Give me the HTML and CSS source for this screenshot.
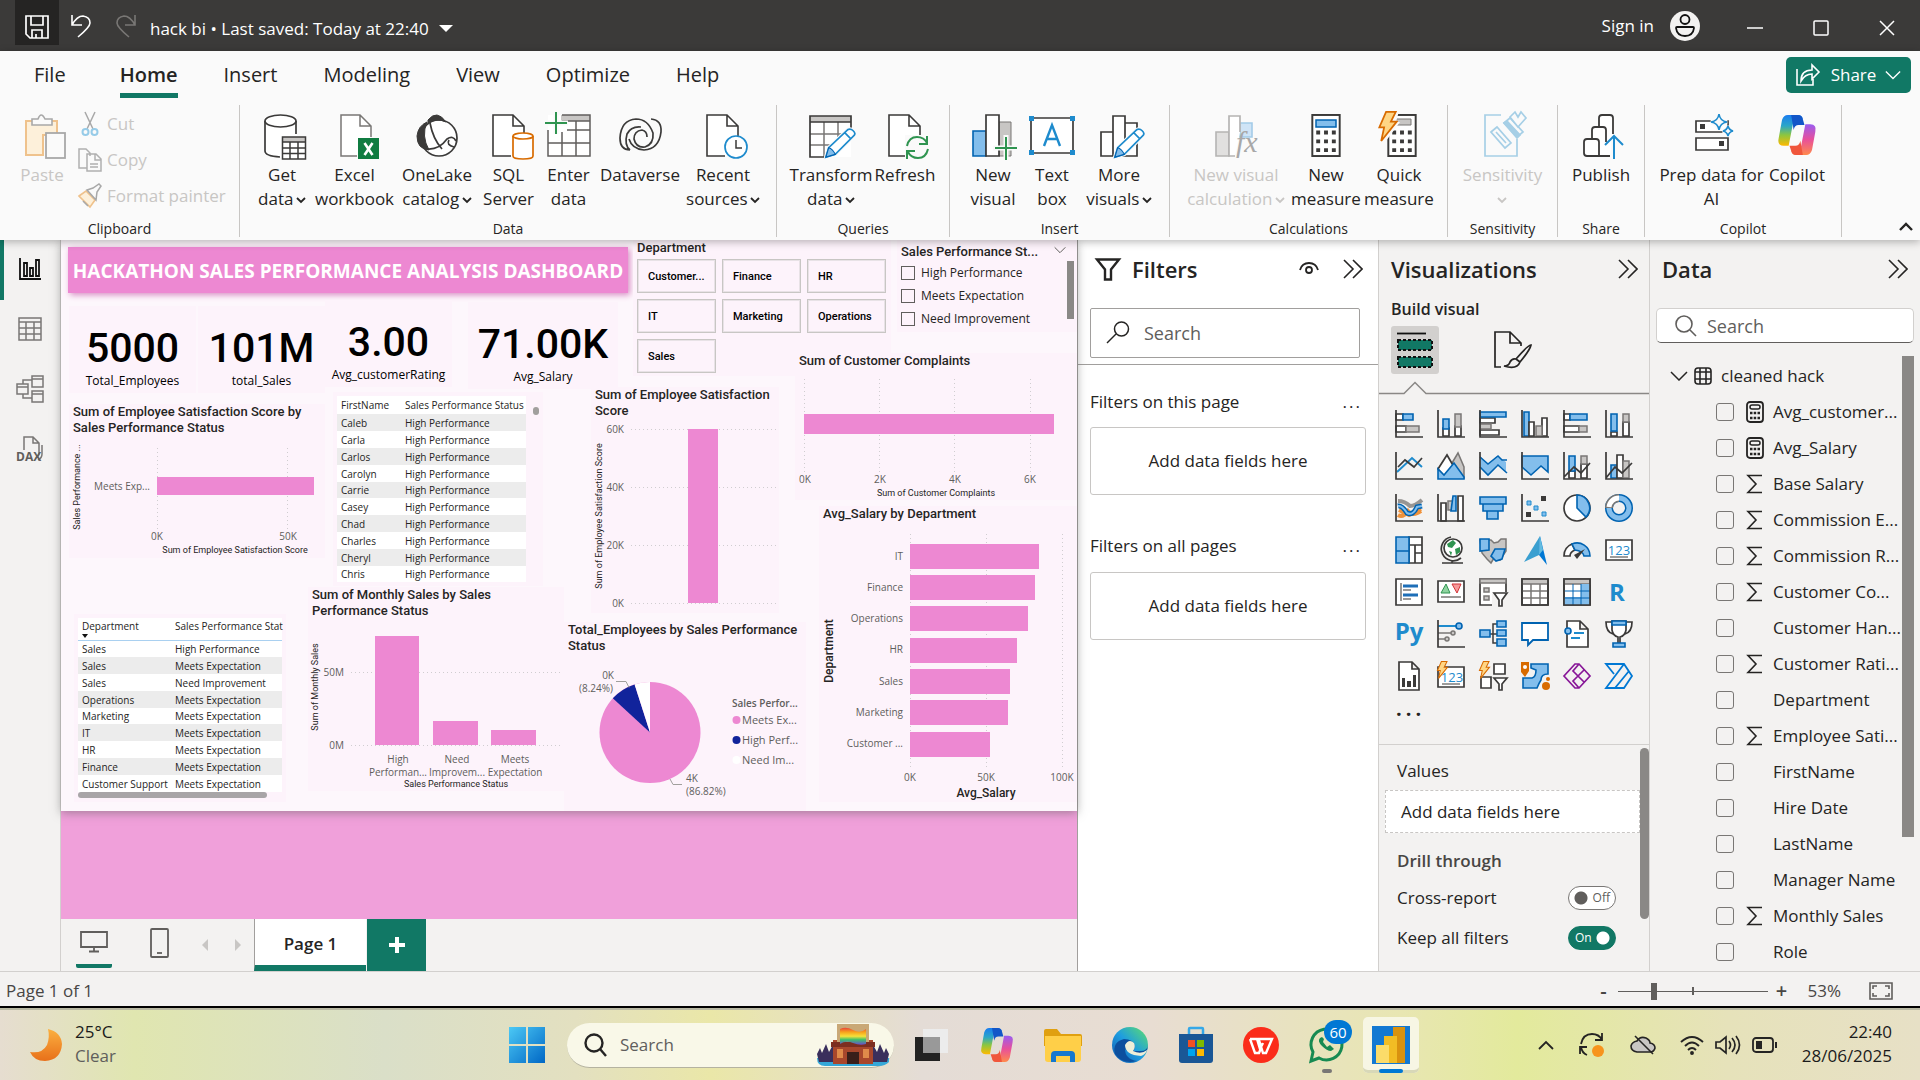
FILE: index.html
```html
<!DOCTYPE html>
<html lang="en">
<head>
<meta charset="utf-8">
<title>hack bi</title>
<link rel="stylesheet" href="styles.css">
</head>
<body>
<svg class="defs" aria-hidden="true">
  <defs>
    <linearGradient id="cpA" x1="0" y1="0" x2="0" y2="1"><stop offset="0" stop-color="#1a7cf0"/><stop offset=".35" stop-color="#2aa6c8"/><stop offset=".65" stop-color="#8cc63f"/><stop offset="1" stop-color="#ffb900"/></linearGradient>
    <linearGradient id="cpB" x1="0" y1="0" x2="0" y2="1"><stop offset="0" stop-color="#9a5cf0"/><stop offset=".5" stop-color="#e8509a"/><stop offset="1" stop-color="#ff8a4c"/></linearGradient>
    <linearGradient id="moon" x1="0" y1="0" x2="0" y2="1"><stop offset="0" stop-color="#fbb040"/><stop offset="1" stop-color="#e8701a"/></linearGradient>
    <linearGradient id="win" x1="0" y1="0" x2="1" y2="1"><stop offset="0" stop-color="#4cc9f5"/><stop offset="1" stop-color="#0067c5"/></linearGradient>
    <linearGradient id="edge" x1="0" y1="1" x2="1" y2="0"><stop offset="0" stop-color="#0f58b0"/><stop offset=".5" stop-color="#1e9de0"/><stop offset="1" stop-color="#5fe06a"/></linearGradient>
    <linearGradient id="rain" x1="0" y1="0" x2="0" y2="1"><stop offset="0" stop-color="#e8453c"/><stop offset=".25" stop-color="#f7a11b"/><stop offset=".5" stop-color="#f6e03a"/><stop offset=".7" stop-color="#3fbf6a"/><stop offset="1" stop-color="#6a4ad0"/></linearGradient>
    <symbol id="doc" viewBox="0 0 48 48"><path d="M39 27V14L28 3H8v41h20" fill="#fff" stroke="none"/><path d="M39 25V14L28 3H8v41h18M28 3v11h11" fill="none" stroke="#3b3a39" stroke-width="1.6"/></symbol>
    <symbol id="pencil" viewBox="0 0 34 34"><path d="M2 32l3-10L25 3q3-2 6 1t1 5L12 29z" fill="#fff" stroke="#fafafa" stroke-width="4"/><path d="M2 32l3-10L25 3q3-2 6 1t1 5L12 29zM22 6l6 6" fill="#fff" stroke="#1e8bcd" stroke-width="1.8"/><path d="M2 32l3-10q4 1 7 7z" fill="#83beec" stroke="#0063b1" stroke-width="1.2"/></symbol>
    <symbol id="dbl" viewBox="0 0 20 20"><path d="M1 1l9 9-9 9M10 1l9 9-9 9" fill="none" stroke="#252423" stroke-width="1.6"/></symbol>
    <symbol id="caret" viewBox="0 0 10 8"><path d="M1 2l4 4 4-4" fill="none" stroke="currentColor" stroke-width="1.8"/></symbol>
    <symbol id="chev" viewBox="0 0 18 10"><path d="M1 1l8 8 8-8" fill="none" stroke="currentColor" stroke-width="1.5"/></symbol>
    <symbol id="sigma" viewBox="0 0 18 20"><path d="M16 1.5H2L10 10 2 18.500H16" fill="none" stroke="#252423" stroke-width="1.6"/></symbol>
    <symbol id="calc" viewBox="0 0 18 22"><rect x="1" y="1" width="16" height="20" rx="3" fill="none" stroke="#252423" stroke-width="1.8"/><rect x="4" y="4" width="10" height="4" rx="2" fill="none" stroke="#252423" stroke-width="1.500"/><path d="M4 12h2.500M7.700 12h2.500M11.500 12H14M4 17h2.500M7.700 17h2.500M11.500 17H14" stroke="#252423" stroke-width="2.500"/></symbol>
    <symbol id="bolt" viewBox="0 0 20 32"><path d="M8 1h10l-5 10h6L3 31l3-14H1z" fill="#ffd685" stroke="#d86b00" stroke-width="1.800"/></symbol>
    <symbol id="copilot" viewBox="0 0 46 48"><path d="M30 5Q29 0 24 0H12Q7 0 5 6L1 28q-2 9 6 9h6l5-26q1-6 7-6z" fill="url(#cpA)"/><path d="M16 0h8q5 0 6 5l2 7h-7q-5 0-6 6z" fill="#1256c8"/><path d="M16 43q1 5 6 5h12q5 0 7-6l4-22q2-9-6-9h-6l-5 26q-1 6-7 6z" fill="url(#cpB)"/><path d="M30 48h-8q-5 0-6-5l-2-6h7q5 0 6-6z" fill="#f0563c"/></symbol>
    <symbol id="pad" viewBox="0 0 30 44"><rect x="1" y="1" width="28" height="42" fill="#fff" stroke="#3b3a39" stroke-width="2"/><path d="M5 17h4v4H5zM13 17h4v4h-4zM21 17h4v4h-4zM5 26h4v4H5zM13 26h4v4h-4zM21 26h4v4h-4zM5 35h4v4H5zM13 35h4v4h-4zM21 35h4v4h-4z" fill="#3b3a39"/></symbol>
  </defs>
</svg>

<header class="titlebar">
  <button class="save" aria-label="Save"><svg width="24" height="24" viewBox="0 0 24 24" fill="none" stroke="#fff" stroke-width="1.700"><path d="M1 1h22v22H5l-4-4zM6 1v9h12V1M7 23v-8h10v8M11 19v4"/></svg></button>
  <button aria-label="Undo"><svg width="22" height="24" viewBox="0 0 22 24" fill="none" stroke="#fff" stroke-width="1.600"><path d="M2 1v10h10M2 11Q7 2 13 2q7 1 7 7 0 4-12 14"/></svg></button>
  <button aria-label="Redo"><svg width="22" height="24" viewBox="0 0 22 24" fill="none" stroke="#797775" stroke-width="1.600"><path d="M20 1v10H10M20 11Q15 2 9 2 2 3 2 9q0 4 12 14"/></svg></button>
  <button class="filename">hack bi • Last saved: Today at 22:40 <svg width="14" height="8" viewBox="0 0 14 8"><path d="M0 0h14L7 7z" fill="#fff"/></svg></button>
  <button class="signin">Sign in <svg width="30" height="30" viewBox="0 0 30 30"><circle cx="15" cy="15" r="15" fill="#f3f2f1"/><circle cx="15" cy="8.500" r="4.500" fill="none" stroke="#111" stroke-width="1.800"/><path d="M7 16h16q1 0 1 1-1 8-9 8t-9-8q0-1 1-1z" fill="none" stroke="#111" stroke-width="1.800"/></svg></button>
  <button class="wbtn" aria-label="Minimize"><svg width="16" height="16" viewBox="0 0 16 16"><path d="M0 8h16" stroke="#fff" stroke-width="1.500"/></svg></button>
  <button class="wbtn" aria-label="Maximize"><svg width="16" height="16" viewBox="0 0 16 16"><rect x="1" y="1" width="14" height="14" rx="1" fill="none" stroke="#fff" stroke-width="1.500"/></svg></button>
  <button class="wbtn" aria-label="Close"><svg width="16" height="16" viewBox="0 0 16 16"><path d="M1 1l14 14M15 1L1 15" stroke="#fff" stroke-width="1.500"/></svg></button>
</header>

<section class="ribbon">
  <nav class="tabs">
    <button>File</button><button class="on">Home</button><button>Insert</button><button>Modeling</button><button>View</button><button>Optimize</button><button>Help</button>
    <button class="share"><svg width="24" height="22" viewBox="0 0 24 22" fill="none" stroke="#fff" stroke-width="1.600"><path d="M1 5v16h16v-6M5 17q0-11 11-11V1l7 7-7 7v-5q-7 0-11 7z"/></svg>Share<svg width="16" height="10"><use href="#chev"/></svg></button>
  </nav>
  <div class="groups">
    <div class="group g-clip">
      <div class="cmds">
        <button class="cmd off"><svg class="ic" viewBox="0 0 48 48"><path d="M8 9h31v14H25v20H8z" fill="#fdf0da" stroke="#efc28c" stroke-width="2"/><path d="M14 13V7h6q3-8 7 0h7v6z" fill="#fafafa" stroke="#a8a8a8" stroke-width="1.600"/><rect x="28" y="21" width="19" height="25" fill="#fafafa" stroke="#a8a8a8" stroke-width="1.800"/></svg>Paste</button>
        <div class="stack">
          <button class="off"><svg width="24" height="24" viewBox="0 0 24 24"><path d="M7 0l8 17M17 0L9 17" stroke="#a8a8a8" stroke-width="1.500"/><circle cx="7.500" cy="20" r="3" fill="none" stroke="#96cbe8" stroke-width="2"/><circle cx="16.500" cy="20" r="3" fill="none" stroke="#96cbe8" stroke-width="2"/></svg>Cut</button>
          <button class="off"><svg width="24" height="24" viewBox="0 0 24 24" fill="#fafafa" stroke="#b0b0b0" stroke-width="1.500"><path d="M9 20H1V1h7l4 4v3M9 6h9l5 5v12H9zM17 6v6h6M12 16h8M12 19h8"/></svg>Copy</button>
          <button class="off"><svg width="24" height="24" viewBox="0 0 24 24"><path d="M1 12l7-5 9 9-5 7z" fill="#fdf0da" stroke="#efc28c" stroke-width="1.600"/><path d="M5 17l5 5M9 6l6-2 6-4 2 2-4 6-1 8z" fill="#fafafa" stroke="#a8a8a8" stroke-width="1.500"/></svg>Format painter</button>
        </div>
      </div>
      <p>Clipboard</p>
    </div>
    <div class="group g-data">
      <div class="cmds">
        <button class="cmd"><svg class="ic" viewBox="0 0 48 48"><path d="M7 9v30q0 5 16 6V26h16V9" fill="#fff" stroke="none"/><path d="M22 45Q7 44 7 39V9M38 9v13" fill="none" stroke="#3b3a39" stroke-width="1.700"/><ellipse cx="22.500" cy="9" rx="15.500" ry="6" fill="#fff" stroke="#3b3a39" stroke-width="1.700"/><path d="M24.500 25h23v22h-23z" fill="#fff"/><path d="M24.500 25h23v5h-23z" fill="#c8c6c4"/><path d="M24.500 25h23v22h-23zM24.500 30h23M24.500 36h23M24.500 41.500h23M32 30v17M40 30v17" fill="none" stroke="#3b3a39" stroke-width="1.500"/></svg><span>Get<br>data <svg class="c"><use href="#caret"/></svg></span></button>
        <button class="cmd"><svg class="ic" viewBox="0 0 48 48"><path d="M40 25V14L29 3H10v41h16M29 3v11h11" fill="#fff" stroke="#797775" stroke-width="1.500"/><path d="M27 26h21v21H27z" fill="#107c41"/><path d="M33.500 31l8 12M41.500 31l-8 12" stroke="#fff" stroke-width="2.600"/></svg><span>Excel<br>workbook</span></button>
        <button class="cmd"><svg class="ic" viewBox="0 0 48 48"><circle cx="26" cy="26" r="18" fill="#fff" stroke="#3b3a39" stroke-width="1.700"/><path d="M15 8Q24-3 33 10 22 5 15 12zM14 10q-6 14 2 28Q4 37 4 24 5 14 14 10z" fill="#3b3a39" stroke="#3b3a39"/><path d="M17 11q3 16 12 26M14 37q12 1 20-10 6-4 9 2M36 28q-3 5 5 7" fill="none" stroke="#3b3a39" stroke-width="1.700"/></svg><span>OneLake<br>catalog <svg class="c"><use href="#caret"/></svg></span></button>
        <button class="cmd"><svg class="ic" viewBox="0 0 48 48"><use href="#doc"/><path d="M28 24v20q0 3 10 3t10-3V24" fill="#fff" stroke="#d86b00" stroke-width="1.700"/><ellipse cx="38" cy="24" rx="10" ry="3" fill="#fff" stroke="#d86b00" stroke-width="1.700"/></svg><span>SQL<br>Server</span></button>
        <button class="cmd"><svg class="ic" viewBox="0 0 48 48"><path d="M3 3h42v41H3z" fill="#fff"/><path d="M16 3h29v6H16z" fill="#c8c6c4"/><path d="M3 18v26h42V3H17M17 9h28M22 18h23M3 31h42M17 20v24M31 9v35" fill="none" stroke="#605e5c" stroke-width="1.500"/><path d="M11-1v23M-1 11h24" stroke="#fafafa" stroke-width="5"/><path d="M11 0v22M0 11h22" stroke="#2f9450" stroke-width="2"/></svg><span>Enter<br>data</span></button>
        <button class="cmd"><svg class="ic" viewBox="0 0 48 48" fill="none" stroke="#3b3a39" stroke-width="1.700"><path d="M14 38Q4 38 4 26 5 8 20 7q12 0 17 14 1 11-8 14-9 1-11-8 0-8 8-9 5 1 5 7M14 38q-6-5-3-16 4-8 14-7"/><path d="M35 7q11 1 10 13-2 17-17 18-12-1-15-11"/></svg><span>Dataverse</span></button>
        <button class="cmd"><svg class="ic" viewBox="0 0 48 48"><use href="#doc"/><circle cx="37" cy="35" r="11" fill="#fff" stroke="#1e8bcd" stroke-width="1.700"/><path d="M37 28v8h6" fill="none" stroke="#3b3a39" stroke-width="1.500"/></svg><span>Recent<br>sources <svg class="c"><use href="#caret"/></svg></span></button>
      </div>
      <p>Data</p>
    </div>
    <div class="group g-query">
      <div class="cmds">
        <button class="cmd"><svg class="ic" viewBox="0 0 48 48"><path d="M3 4h41v41H3z" fill="#fff"/><path d="M3 4h41v6H3z" fill="#c8c6c4"/><path d="M3 22h41M3 33h30M17 10v35M31 10v23" stroke="#797775" stroke-width="1.500"/><path d="M18 45H3V4h41v14M3 10h41" fill="none" stroke="#3b3a39" stroke-width="1.700"/><use href="#pencil" x="17" y="15" width="32" height="32"/></svg><span>Transform<br>data <svg class="c"><use href="#caret"/></svg></span></button>
        <button class="cmd"><svg class="ic" viewBox="0 0 48 48"><use href="#doc"/><path d="M24 23h24v25H24z" fill="#fafafa"/><path d="M26 34q2-9 10-9 7 0 10 6M46 24v8h-8M47 37q-2 9-10 9-7 0-10-6M26 47v-8h8" fill="none" stroke="#2f9450" stroke-width="2"/></svg><span>Refresh</span></button>
      </div>
      <p>Queries</p>
    </div>
    <div class="group g-insert">
      <div class="cmds">
        <button class="cmd"><svg class="ic" viewBox="0 0 48 48"><path d="M30 10h12v34H30z" fill="#c8c6c4" stroke="#797775"/><path d="M4 19h13v25H4z" fill="#83beec" stroke="#0063b1" stroke-width="1.600"/><path d="M17 3h13v41H17z" fill="#fff" stroke="#3b3a39" stroke-width="1.700"/><path d="M37 23v25M24 36h25" stroke="#fafafa" stroke-width="5"/><path d="M37 25v23M26 36h22" stroke="#2f9450" stroke-width="2"/></svg><span>New<br>visual</span></button>
        <button class="cmd"><svg class="ic" viewBox="0 0 48 48"><path d="M3 6h42v35H3z" fill="#fff" stroke="#3b3a39" stroke-width="1.700"/><path d="M1 4h5v5H1zM42 4h5v5h-5zM1 38h5v5H1zM42 38h5v5h-5z" fill="#1e8bcd"/><path d="M16 34l8-21 8 21M19 27h10" fill="none" stroke="#1e8bcd" stroke-width="2.400"/></svg><span>Text<br>box</span></button>
        <button class="cmd"><svg class="ic" viewBox="0 0 48 48" fill="#fff" stroke="#3b3a39" stroke-width="1.700"><path d="M30 11h12v33H30zM6 20h12v24H6zM18 4h12v40H18z"/><use href="#pencil" x="18" y="15" width="32" height="32"/></svg><span>More<br>visuals <svg class="c"><use href="#caret"/></svg></span></button>
      </div>
      <p>Insert</p>
    </div>
    <div class="group g-calc">
      <div class="cmds">
        <button class="cmd off"><svg class="ic" viewBox="0 0 48 48"><path d="M28 11h12v14H28z" fill="#cfe4f6" stroke="#a3cbe8" stroke-width="1.600"/><path d="M4 20h13v24H4z" fill="#e1e0df" stroke="#b5b4b3" stroke-width="1.600"/><path d="M28 20V4H17v40h6" fill="#fff" stroke="#b5b4b3" stroke-width="1.700"/><text x="24" y="40" class="fx">fx</text></svg><span>New visual<br>calculation <svg class="c"><use href="#caret"/></svg></span></button>
        <button class="cmd"><svg class="ic" viewBox="0 0 48 48"><use href="#pad" x="9" y="2" width="30" height="43"/><path d="M14 8h20v7H14z" fill="#83beec" stroke="#0063b1" stroke-width="1.500"/></svg><span>New<br>measure</span></button>
        <button class="cmd"><svg class="ic" viewBox="0 0 48 48"><use href="#pad" x="12" y="2" width="30" height="43"/><path d="M17 7h19v6H17z" fill="#c8c6c4" stroke="#797775"/><path d="M9-1h15l-3 11h4L8 33z" fill="#fafafa"/><use href="#bolt" x="3" y="-1" width="20" height="31"/></svg><span>Quick<br>measure</span></button>
      </div>
      <p>Calculations</p>
    </div>
    <div class="group g-sens">
      <div class="cmds">
        <button class="cmd off"><svg class="ic" viewBox="0 0 48 48" fill="#fafafa" stroke="#a6cfe6" stroke-width="1.700"><path d="M22 3H6v41h32V27"/><path d="M12 20l6-5 14 16-6 5zM17 20l10 11"/><path d="M25 11l6-5 13 14-6 5z"/><path d="M25 11l3-2 13 14-3 3z" fill="#a6cfe6"/><path d="M31 5l5-5 3 5 3-5 5 6-8 9z"/></svg><span>Sensitivity<br><svg class="c"><use href="#caret"/></svg></span></button>
      </div>
      <p>Sensitivity</p>
    </div>
    <div class="group g-share">
      <div class="cmds">
        <button class="cmd"><svg class="ic" viewBox="0 0 48 48" fill="#fff" stroke="#3b3a39" stroke-width="1.800"><path d="M36 22V6q0-3-3-3h-8q-3 0-3 3v38h11"/><path d="M29 30V18q0-3-3-3h-8q-3 0-3 3v26h14"/><path d="M7 30q0-3 3-3h9q3 0 3 3v14H10q-3 0-3-3z"/><path d="M37 47V24" stroke="#fafafa" stroke-width="6"/><path d="M37 47V24M28 33l9-9 9 9" fill="none" stroke="#1e8bcd" stroke-width="2"/></svg><span>Publish</span></button>
      </div>
      <p>Share</p>
    </div>
    <div class="group g-copilot">
      <div class="cmds">
        <button class="cmd"><svg class="ic" viewBox="0 0 48 48"><path d="M8 9h32v11H8zM8 26h32v12H8z" fill="#fff" stroke="#3b3a39" stroke-width="1.700"/><path d="M12 12h5v5h-5zM31 29h5v5h-5z" fill="#3b3a39"/><path d="M31 2q1 7 8 8-7 1-8 8-1-7-8-8 7-1 8-8zM40 14q1 4 5 5-4 1-5 5-1-4-5-5 4-1 5-5z" fill="#fafafa" stroke="#fafafa" stroke-width="5"/><path d="M31 2q1 7 8 8-7 1-8 8-1-7-8-8 7-1 8-8zM40 14q1 4 5 5-4 1-5 5-1-4-5-5 4-1 5-5z" fill="#fafafa" stroke="#1e8bcd" stroke-width="1.600"/></svg><span>Prep data for<br>AI</span></button>
        <button class="cmd"><svg class="ic" viewBox="0 0 48 48"><use href="#copilot" x="1" y="3" width="46" height="40"/></svg><span>Copilot</span></button>
      </div>
      <p>Copilot</p>
    </div>
    <button class="collapse" aria-label="Collapse ribbon"><svg width="14" height="9" viewBox="0 0 14 9"><path d="M1 8l6-6 6 6" fill="none" stroke="#252423" stroke-width="2.400"/></svg></button>
  </div>
</section>

<main class="work">
  <nav class="rail">
    <button class="on" aria-label="Report view"><svg width="24" height="24" viewBox="0 0 24 24" fill="none" stroke="#111" stroke-width="1.800"><path d="M2 1v21h21M6 6h3v13H6zM12 11h3v8h-3zM18 3h3v16h-3z"/></svg></button>
    <button aria-label="Table view"><svg width="24" height="24" viewBox="0 0 24 24" fill="none" stroke="#797775" stroke-width="1.500"><path d="M1 1h22v22H1zM1 5h22M1 11h22M1 17h22M8 5v18M16 5v18"/></svg></button>
    <button aria-label="Model view"><svg width="28" height="28" viewBox="0 0 28 28" fill="none" stroke="#797775" stroke-width="1.500"><path d="M16 1h11v11H16zM16 4h11M16 16h11v11H16zM16 19h11M1 9h11v10H1zM1 12h11M7 9V5h9M7 19v4h9"/></svg></button>
    <button aria-label="DAX query view"><svg width="26" height="26" viewBox="0 0 26 26" fill="none" stroke="#797775" stroke-width="1.500"><path d="M7 14V1h9l6 6v10q0 3-3 5M16 1v6h6M25 9v9q0 4-4 6"/><text x="-1" y="25" class="dax">DAX</text></svg></button>
  </nav>

  <section class="report">
    <div class="canvas">
      <h1 class="visual banner">HACKATHON SALES PERFORMANCE ANALYSIS DASHBOARD</h1>
      <div class="visual card k1"><b>5000</b><span>Total_Employees</span></div>
      <div class="visual card k2"><b>101M</b><span>total_Sales</span></div>
      <div class="visual card k3"><b>3.00</b><span>Avg_customerRating</span></div>
      <div class="visual card k4"><b>71.00K</b><span>Avg_Salary</span></div>

      <div class="visual slicer">
        <h2>Department</h2>
        <div class="tiles"><button>Customer...</button><button>Finance</button><button>HR</button><button>IT</button><button>Marketing</button><button>Operations</button><button>Sales</button></div>
      </div>

      <div class="visual checks">
        <header><h2>Sales Performance St...</h2><svg width="12" height="8"><use href="#chev"/></svg></header>
        <div class="body"><div>
          <label><input type="checkbox">High Performance</label>
          <label><input type="checkbox">Meets Expectation</label>
          <label><input type="checkbox">Need Improvement</label></div>
          <i class="thumb"></i></div>
      </div>

      <div class="visual sat-status">
        <h2>Sum of Employee Satisfaction Score by Sales Performance Status</h2>
        <svg width="256" height="120" viewBox="69 438 256 120">
          <path class="grid" d="M157.500 448v81M287.500 448v81"/>
          <rect class="bar" x="157" y="477" width="157" height="18"/>
          <g class="tick"><text x="150" y="490" class="end">Meets Exp...</text><text x="157" y="540" class="mid">0K</text><text x="288" y="540" class="mid">50K</text></g>
          <g class="axis"><text x="235" y="553" class="mid">Sum of Employee Satisfaction Score</text><text transform="translate(80 487) rotate(-90)" class="mid">Sales Performance ...</text></g>
        </svg>
      </div>

      <div class="visual names">
        <table>
          <thead><tr><th>FirstName</th><th>Sales Performance Status</th></tr></thead>
          <tbody>
            <tr><td>Caleb</td><td>High Performance</td></tr><tr><td>Carla</td><td>High Performance</td></tr><tr><td>Carlos</td><td>High Performance</td></tr><tr><td>Carolyn</td><td>High Performance</td></tr><tr><td>Carrie</td><td>High Performance</td></tr><tr><td>Casey</td><td>High Performance</td></tr><tr><td>Chad</td><td>High Performance</td></tr><tr><td>Charles</td><td>High Performance</td></tr><tr><td>Cheryl</td><td>High Performance</td></tr><tr><td>Chris</td><td>High Performance</td></tr>
          </tbody>
        </table>
        <i class="dot"></i>
      </div>

      <div class="visual sat-total">
        <h2>Sum of Employee Satisfaction Score</h2>
        <svg width="188" height="194" viewBox="591 419 188 194">
          <path class="grid" d="M631 429.500h145M631 487.500h145M631 545.500h145M631 603.500h145"/>
          <rect class="bar" x="688" y="429" width="30" height="174"/>
          <g class="tick"><text x="624" y="433" class="end">60K</text><text x="624" y="491" class="end">40K</text><text x="624" y="549" class="end">20K</text><text x="624" y="607" class="end">0K</text></g>
          <g class="axis"><text transform="translate(602 516) rotate(-90)" class="mid">Sum of Employee Satisfaction Score</text></g>
        </svg>
      </div>

      <div class="visual complaints">
        <h2>Sum of Customer Complaints</h2>
        <svg width="282" height="130" viewBox="795 370 282 130">
          <path class="grid" d="M804.500 379v93M879.500 379v93M954.500 379v93M1030.500 379v93"/>
          <rect class="bar" x="804" y="414" width="250" height="20"/>
          <g class="tick"><text x="805" y="483" class="mid">0K</text><text x="880" y="483" class="mid">2K</text><text x="955" y="483" class="mid">4K</text><text x="1030" y="483" class="mid">6K</text></g>
          <g class="axis"><text x="936" y="496" class="mid">Sum of Customer Complaints</text></g>
        </svg>
      </div>

      <div class="visual salary">
        <h2>Avg_Salary by Department</h2>
        <svg width="258" height="279" viewBox="819 523 258 279">
          <path class="grid" d="M910.500 534v236M986.500 534v236M1062.500 534v236"/>
          <g class="bar"><rect x="910" y="544" width="129" height="25"/><rect x="910" y="575" width="125" height="25"/><rect x="910" y="606" width="118" height="25"/><rect x="910" y="638" width="107" height="25"/><rect x="910" y="669" width="100" height="25"/><rect x="910" y="700" width="98" height="25"/><rect x="910" y="732" width="80" height="25"/></g>
          <g class="tick end"><text x="903" y="560">IT</text><text x="903" y="591">Finance</text><text x="903" y="622">Operations</text><text x="903" y="653">HR</text><text x="903" y="685">Sales</text><text x="903" y="716">Marketing</text><text x="903" y="747">Customer ...</text></g>
          <g class="tick"><text x="910" y="781" class="mid">0K</text><text x="986" y="781" class="mid">50K</text><text x="1062" y="781" class="mid">100K</text></g>
          <g class="axis big"><text x="986" y="797" class="mid">Avg_Salary</text><text transform="translate(833 651) rotate(-90)" class="mid">Department</text></g>
        </svg>
      </div>

      <div class="visual depts">
        <table>
          <thead><tr><th>Department</th><th>Sales Performance Stat</th></tr></thead>
          <tbody>
            <tr><td>Sales</td><td>High Performance</td></tr><tr><td>Sales</td><td>Meets Expectation</td></tr><tr><td>Sales</td><td>Need Improvement</td></tr><tr><td>Operations</td><td>Meets Expectation</td></tr><tr><td>Marketing</td><td>Meets Expectation</td></tr><tr><td>IT</td><td>Meets Expectation</td></tr><tr><td>HR</td><td>Meets Expectation</td></tr><tr><td>Finance</td><td>Meets Expectation</td></tr><tr><td>Customer Support</td><td>Meets Expectation</td></tr>
          </tbody>
        </table>
        <i class="hbar"></i>
      </div>

      <div class="visual monthly">
        <h2>Sum of Monthly Sales by Sales Performance Status</h2>
        <svg width="256" height="170" viewBox="308 621 256 170">
          <path class="grid" d="M351 672.500h211M351 745.500h211"/>
          <g class="bar"><rect x="375" y="636" width="44" height="109"/><rect x="433" y="721" width="45" height="24"/><rect x="491" y="730" width="45" height="15"/></g>
          <g class="tick"><text x="344" y="676" class="end">50M</text><text x="344" y="749" class="end">0M</text></g>
          <g class="tick mid"><text x="398" y="763">High</text><text x="398" y="776">Performan...</text><text x="457" y="763">Need</text><text x="457" y="776">Improvem...</text><text x="515" y="763">Meets</text><text x="515" y="776">Expectation</text></g>
          <g class="axis"><text x="456" y="787" class="mid">Sales Performance Status</text><text transform="translate(318 687) rotate(-90)" class="mid">Sum of Monthly Sales</text></g>
        </svg>
      </div>

      <div class="visual pie">
        <h2>Total_Employees by Sales Performance Status</h2>
        <svg width="242" height="155" viewBox="564 656 242 155">
          <circle cx="650" cy="732.500" r="50.500" fill="#ed88d2"/>
          <path d="M650 732.500L612.800 698.300A50.500 50.500 0 0 1 634.600 684.400z" fill="#11239b"/>
          <path d="M650 732.500L634.600 684.400A50.500 50.500 0 0 1 650 682z" fill="#fff"/>
          <path d="M616 681.500h10l3 6M670 779l3 5.500h9" fill="none" stroke="#a19f9d"/>
          <g class="tick"><text x="614" y="679" class="end">0K</text><text x="613" y="692" class="end">(8.24%)</text><text x="686" y="782">4K</text><text x="686" y="795">(86.82%)</text></g>
          <g class="legend"><text x="732" y="707" class="b">Sales Perfor...</text><circle cx="736.500" cy="720" r="4" fill="#ed88d2"/><text x="742" y="724">Meets Ex...</text><circle cx="736.500" cy="740" r="4" fill="#11239b"/><text x="742" y="744">High Perf...</text><circle cx="736.500" cy="760" r="4" fill="#fff"/><text x="742" y="764">Need Im...</text></g>
        </svg>
      </div>
    </div>
    <div class="beyond"></div>
    <footer class="pages">
      <button class="mode on" aria-label="Desktop layout"><svg width="28" height="22" viewBox="0 0 28 22" fill="none" stroke="#605e5c" stroke-width="1.800"><path d="M1 1h26v15H1zM14 16v4M9 20.500h10"/></svg></button>
      <button class="mode" aria-label="Mobile layout"><svg width="19" height="30" viewBox="0 0 19 30" fill="none" stroke="#605e5c" stroke-width="1.800"><rect x="1" y="1" width="17" height="28" rx="1"/><path d="M7 25h5"/></svg></button>
      <button class="arrow" aria-label="Previous page"><svg width="6" height="12"><path d="M6 0v12L0 6z" fill="#c8c6c4"/></svg></button>
      <button class="arrow" aria-label="Next page"><svg width="6" height="12"><path d="M0 0v12l6-6z" fill="#c8c6c4"/></svg></button>
      <button class="tab">Page 1</button>
      <button class="add" aria-label="New page"><svg width="16" height="16"><path d="M8 0v16M0 8h16" stroke="#fff" stroke-width="4"/></svg></button>
    </footer>
  </section>

  <aside class="filters">
    <header><svg width="26" height="23" viewBox="0 0 26 23"><path d="M2 1.500h22l-8 10v10h-6v-10z" fill="none" stroke="#252423" stroke-width="2.400"/></svg><h2>Filters</h2><button class="eye" aria-label="Show filters"><svg width="20" height="14" viewBox="0 0 20 14" fill="none" stroke="#252423" stroke-width="1.800"><path d="M1 8q2-7 9-7t9 7"/><circle cx="10" cy="8" r="3"/></svg></button><button aria-label="Collapse filters"><svg width="20" height="20"><use href="#dbl"/></svg></button></header>
    <label class="search"><svg width="24" height="24" viewBox="0 0 24 24" fill="none" stroke="#252423" stroke-width="1.500"><circle cx="15.500" cy="8" r="7"/><path d="M10 13L1 22"/></svg><input type="text" placeholder="Search" aria-label="Search filters"></label>
    <div class="ftitle">Filters on this page<button aria-label="More options">...</button></div>
    <div class="well">Add data fields here</div>
    <div class="ftitle second">Filters on all pages<button aria-label="More options">...</button></div>
    <div class="well">Add data fields here</div>
  </aside>

  <aside class="viz">
    <header><h2>Visualizations</h2><button aria-label="Collapse visualizations"><svg width="20" height="20"><use href="#dbl"/></svg></button></header>
    <h3>Build visual</h3>
    <div class="modes">
      <button class="on" aria-label="Build"><svg width="36" height="36" viewBox="0 0 36 36"><path d="M0 1.500h29" stroke="#111" stroke-width="1.800"/><path d="M1 8h34v10H1zM1 25h34v10H1z" fill="#117865" stroke="#111" stroke-width="2" stroke-dasharray="3 2"/></svg></button>
      <button aria-label="Format"><svg width="38" height="38" viewBox="0 0 38 38" fill="none" stroke="#252423" stroke-width="1.700"><path d="M7 36H1V1h15l11 11v3M16 1v11h11M37 14q-3 0-15 14l4 3q10-12 11-17zM22 28q-4-1-6 3-1 4-6 4 13 4 16-4"/></svg></button>
    </div>
    <svg class="notch" viewBox="0 0 270 14" preserveAspectRatio="xMinYMin slice"><path d="M0 12.500h25l11-11 11 11h300" fill="none" stroke="#8a8886" stroke-width="1.500"/></svg>
    <div class="gallery">
      <svg viewBox="0 0 28 28"><path class="w" d="M1 4h7v6H1zM1 16h10v6H1z"/><path class="bl" d="M8 4h10v6H8z"/><path class="gr" d="M11 16h13v6H11z"/><path class="ax" d="M1 0v27h27"/></svg>
      <svg viewBox="0 0 28 28"><path class="w" d="M6 18h6v8H6zM18 16h6v10h-6z"/><path class="bl" d="M6 9h6v10H6z"/><path class="gr" d="M18 4h6v13h-6z"/><path class="ax" d="M1 0v27h27"/></svg>
      <svg viewBox="0 0 28 28"><path class="w" d="M1 8h15v5H1zM1 20h19v5H1z"/><path class="gr" d="M1 14h11v5H1z"/><path class="bl" d="M1 2h26v5H1z"/><path class="ax" d="M1 0v27h27"/></svg>
      <svg viewBox="0 0 28 28"><path class="bl" d="M3 2h5v24H3z"/><path class="w" d="M8 12h5v14H8zM21 8h5v18h-5z"/><path class="gr" d="M15 16h6v10h-6z"/><path class="ax" d="M1 0v27h27"/></svg>
      <svg viewBox="0 0 28 28"><path class="w" d="M1 4h6v6H1zM1 16h15v6H1z"/><path class="bl" d="M7 4h17v6H7z"/><path class="gr" d="M16 16h8v6h-8z"/><path class="ax" d="M1 0v27h27"/></svg>
      <svg viewBox="0 0 28 28"><path class="w" d="M6 22h6v4H6zM18 12h6v14h-6z"/><path class="bl" d="M6 4h6v17H6z"/><path class="gr" d="M18 4h6v8h-6z"/><path class="ax" d="M1 0v27h27"/></svg>

      <svg viewBox="0 0 28 28"><path d="M2 20L17 6l10 9" fill="none" stroke="#1e8bcd" stroke-width="2"/><path class="ax" d="M3 15l7-7 9 7 8-9M1 0v27h27"/></svg>
      <svg viewBox="0 0 28 28"><path class="gr" d="M12 16L21 1l6 14v11H14z"/><path class="w" d="M1 17L10 3l7 12-9 10z"/><path class="bl" d="M1 17l6 6L17 11l10 14v2H1z"/></svg>
      <svg viewBox="0 0 28 28"><path class="bl n" d="M1 4l8 8 9-8 9 6v10l-9-7-9 10-8-8z"/><path class="bs" d="M1 5l8 7 10-8 4 4h5M1 15l8 8 10-10 9 8"/><path class="ax" d="M1 0v27h27"/></svg>
      <svg viewBox="0 0 28 28"><path class="bl" d="M1 4h26v16l-7-6-10 9-9-8z"/><path class="ax" d="M1 0v27h27"/></svg>
      <svg viewBox="0 0 28 28"><path class="w" d="M6 19h6v7H6zM18 12h6v14h-6z"/><path class="bl" d="M6 4h6v15H6z"/><path class="gr" d="M18 4h6v8h-6z"/><path class="ax" d="M1 25l10-10 7 6 9-10M1 0v27h27"/></svg>
      <svg viewBox="0 0 28 28"><path class="bl" d="M6 13h6v13H6z"/><path class="w" d="M12 3h6v23h-6z"/><path class="gr" d="M18 9h6v17h-6z"/><path class="ax" d="M1 26l9-11 7 6 10-10M1 0v27h27"/></svg>

      <svg viewBox="0 0 28 28"><path d="M3 21q5 3 10-4 5 6 13 0M4 16l10 5 12-6" fill="none" stroke="#f0923a" stroke-width="4"/><path d="M3 7q7 0 12 5 5 0 12-6" fill="none" stroke="#979593" stroke-width="4"/><path d="M3 12q4-1 9 7 6 3 10-6l5-1" fill="none" stroke="#0063b1" stroke-width="5"/><path d="M3 12q4-1 9 7 6 3 10-6l5-1" fill="none" stroke="#83beec" stroke-width="2"/><path class="ax" d="M1 0v27h27"/></svg>
      <svg viewBox="0 0 28 28"><path class="w" d="M4 9h5v18H4zM21 2h5v25h-5z"/><path class="gr" d="M11 7h5v9h-5z"/><path class="bl" d="M16 2h3v15h-5z"/><path class="ax" d="M1 0v27h27"/></svg>
      <svg viewBox="0 0 28 28"><path class="bl" d="M1 3h26v7H1zM4 10h20v7H4zM8 17h11v8H8z"/></svg>
      <svg viewBox="0 0 28 28"><path d="M6 7h4v4H6zM13 12h4v4h-4zM21 18h4v4h-4z" fill="#83beec" stroke="#1e8bcd"/><path d="M20 2h5v5h-5zM5 18h5v5H5z" fill="#3b3a39"/><path class="ax" d="M1 0v27h27"/></svg>
      <svg viewBox="0 0 28 28"><circle class="w" cx="14" cy="14" r="13"/><path class="bl" d="M14 1a13 13 0 0 1 9 22l-9-9z"/></svg>
      <svg viewBox="0 0 28 28"><circle cx="14" cy="14" r="10" fill="none" stroke="#0063b1" stroke-width="8"/><circle cx="14" cy="14" r="10" fill="none" stroke="#83beec" stroke-width="5"/><path d="M14 4A10 10 0 0 0 4 14" fill="none" stroke="#797775" stroke-width="8"/><path d="M14 4A10 10 0 0 0 4 13" fill="none" stroke="#fff" stroke-width="5"/></svg>

      <svg viewBox="0 0 28 28"><path class="w" d="M14 1h13v26H14zM14 9h13M20 9v18M20 17h7"/><path class="bl" d="M1 1h13v26H1zM1 15h13"/></svg>
      <svg viewBox="0 0 28 28"><circle class="w" cx="16" cy="12" r="9"/><path d="M10 8l6-4 3 3-4 5-4-1zM18 13l5-2v5l-4 3zM12 15l3 1-1 4z" fill="#2f9450"/><path class="ax" d="M14 1A12 12 0 1 0 24 22M15 24v3M5 27h21"/></svg>
      <svg viewBox="0 0 28 28"><path class="gr" d="M1 4h11l3 3 4-1 3-3h5v12l-6 9-6-2-3 5-4-4-5-6z"/><path class="bl" d="M1 3h9v11L1 15zM16 13h10l-3 10-6 2-5-5z"/></svg>
      <svg viewBox="0 0 28 28"><path d="M19 0L3 26l15-7z" fill="#3a9fd0"/><path d="M19 0l7 29-8-10z" fill="#0078d4"/><path d="M19 0l-1 19 4-5z" fill="#63bce0"/></svg>
      <svg viewBox="0 0 28 28"><path class="w" d="M1 20A13 13 0 0 1 9 8l3 6q-5 2-5 6z"/><path class="bl" d="M9 8a13 13 0 0 1 18 12h-6q-1-5-9-6z"/><path d="M11 19l11-6-8 10z" fill="#3b3a39"/></svg>
      <svg viewBox="0 0 28 28"><path class="w" d="M1 4h26v20H1z"/><text x="14" y="19" class="num">123</text><path d="M5 21h18" stroke="#3b3a39"/></svg>

      <svg viewBox="0 0 28 28"><path class="w" d="M1 1h26v26H1z"/><path d="M6 5v18" stroke="#797775" stroke-width="1.500"/><path d="M8 8h15M8 17h15" stroke="#1e6fb8" stroke-width="3"/><path d="M8 12h8M8 21h8" stroke="#797775" stroke-width="1.500"/></svg>
      <svg viewBox="0 0 28 28"><path class="w" d="M1 3h26v21H1z"/><path d="M4 15l5-9 4 9z" fill="#8fd3a0" stroke="#2f9450"/><path d="M15 6h9l-4 9z" fill="#f59a9a" stroke="#d13438"/><path d="M4 19h20" stroke="#797775" stroke-width="1.500"/></svg>
      <svg viewBox="0 0 28 28"><path class="w" d="M1 1h26v26H1z"/><path class="gr" d="M1 1h26v4H1zM5 10h5v4H5zM5 18h5v4H5z"/><path d="M13 14h17v15H13z" fill="#f3f2f1"/><path class="w" d="M15 15h13l-5 7v6h-3v-6z"/></svg>
      <svg viewBox="0 0 28 28"><path class="w" d="M1 1h26v26H1z"/><path class="gr" d="M1 1h26v5H1z"/><path d="M1 13h26M1 20h26M10 6v21M19 6v21" stroke="#797775" stroke-width="1.500"/><path class="ax" d="M1 1h26v26H1z"/></svg>
      <svg viewBox="0 0 28 28"><path class="w" d="M1 1h26v26H1z"/><path class="gr" d="M1 1h26v5H1z"/><path d="M18 6h9v21H1v-8h17z" fill="#83beec"/><path d="M1 13h26M1 20h26M10 6v21M18 6v21" stroke="#0063b1"/><path class="ax" d="M1 1h26v26H1z"/></svg>
      <svg viewBox="0 0 28 28"><text x="12" y="23" class="let">R</text></svg>

      <svg viewBox="0 0 28 28"><text x="14" y="20" class="let">Py</text></svg>
      <svg viewBox="0 0 28 28"><path d="M1 6h20" stroke="#1e8bcd" stroke-width="2"/><path d="M1 13h15M1 19h8" stroke="#797775" stroke-width="1.500"/><circle class="bl" cx="22" cy="6" r="3"/><circle class="gr" cx="16" cy="13" r="2"/><circle class="gr" cx="10" cy="19" r="2"/><path class="ax" d="M1 0v27h27"/></svg>
      <svg viewBox="0 0 28 28"><path d="M10 14h8M18 4h-4v19h4" fill="none" stroke="#3b3a39" stroke-width="1.500"/><path class="bl" d="M1 10h10v7H1zM18 1h9v6h-9zM18 10h9v6h-9zM18 19h9v7h-9z"/></svg>
      <svg viewBox="0 0 28 28"><path d="M1 3h26v17H12l-5 5v-5H1z" fill="#fff" stroke="#0063b1" stroke-width="1.800"/></svg>
      <svg viewBox="0 0 28 28"><path class="w" d="M4 1h13l8 8v18H4zM17 1v8h8"/><path d="M11 13h10M8 18h9" stroke="#1e8bcd" stroke-width="1.800"/><circle class="bl" cx="5" cy="11" r="3"/></svg>
      <svg viewBox="0 0 28 28"><path class="w" d="M7 2H1q0 10 7 12M21 2h6q0 10-7 12M7 1h14v9q-1 6-6 7v7h-2v-7q-5-1-6-7z"/><path class="bl" d="M7 1h14v4H7zM8 23h12v4H8z"/></svg>

      <svg viewBox="0 0 28 28"><path class="w" d="M4 0h13l7 7v21H4zM17 0v7h7"/><path d="M7 16h3v9H7zM12 19h4v6h-4zM18 13h3v12h-3z" fill="#3b3a39"/></svg>
      <svg viewBox="0 0 28 28"><path class="w" d="M1 5h26v20H1z"/><text x="15" y="20" class="num">123</text><path d="M5 22h18" stroke="#3b3a39"/><use href="#bolt" x="-1" y="-1" width="13" height="18"/></svg>
      <svg viewBox="0 0 28 28"><path class="w" d="M15 2h11v10H15zM2 15h10v11H2z"/><path d="M13 14h17v15H13z" fill="#f3f2f1"/><path class="w" d="M15 16h13l-5 6v6h-3v-6z"/><use href="#bolt" x="-1" y="-1" width="13" height="18"/></svg>
      <svg viewBox="0 0 28 28"><path class="bl" d="M10 2h17v10q-7 0-7 6-2 3-4 8H2V16h9q4-1 4-8l-5-2z"/><path d="M0 0h8v9l-4 6-4-5zM4 1" fill="#d86b00"/><circle cx="4" cy="5" r="2" fill="#fff"/><circle cx="25" cy="24" r="4" fill="#d86b00"/><circle cx="27" cy="17" r="2" fill="#d86b00"/></svg>
      <svg viewBox="0 0 28 28"><path d="M12 2L1 14l11 12h4l11-12L16 2zM16 2l-6 7 11 11M21 8L10 19l6 7" fill="none" stroke="#881798" stroke-width="1.700"/></svg>
      <svg viewBox="0 0 28 28"><path d="M9 12L1 2h18l8 12-8 12H1L19 2M10 26l14-17" fill="none" stroke="#0078d4" stroke-width="1.800"/></svg>
    </div>
    <button class="more" aria-label="Get more visuals">...</button>
    <div class="wells">
      <div class="fields">
        <h4>Values</h4>
        <div class="drop">Add data fields here</div>
        <h4 class="b">Drill through</h4>
        <label class="toggle">Cross-report<span class="sw"><input type="checkbox"><em>Off</em></span></label>
        <label class="toggle">Keep all filters<span class="sw"><input type="checkbox" checked><em>On</em></span></label>
      </div>
      <i class="thumb"></i>
    </div>
  </aside>

  <aside class="data">
    <header><h2>Data</h2><button aria-label="Collapse data"><svg width="20" height="20"><use href="#dbl"/></svg></button></header>
    <label class="search"><svg width="22" height="22" viewBox="0 0 22 22" fill="none" stroke="#605e5c" stroke-width="1.600"><circle cx="9" cy="9" r="8"/><path d="M15 15l6 6"/></svg><input type="text" placeholder="Search" aria-label="Search data"></label>
    <div class="tree">
      <div class="list">
        <div class="table"><svg width="18" height="10"><use href="#chev"/></svg><svg width="18" height="18" viewBox="0 0 18 18" fill="none" stroke="#252423" stroke-width="1.600"><rect x="1" y="1" width="16" height="16" rx="3"/><path d="M6 1v16M12 1v16M1 5h16M1 12h16"/></svg>cleaned hack</div>
        <label><input type="checkbox"><svg><use href="#calc"/></svg>Avg_customer...</label>
        <label><input type="checkbox"><svg><use href="#calc"/></svg>Avg_Salary</label>
        <label><input type="checkbox"><svg><use href="#sigma"/></svg>Base Salary</label>
        <label><input type="checkbox"><svg><use href="#sigma"/></svg>Commission E...</label>
        <label><input type="checkbox"><svg><use href="#sigma"/></svg>Commission R...</label>
        <label><input type="checkbox"><svg><use href="#sigma"/></svg>Customer Co...</label>
        <label><input type="checkbox"><svg></svg>Customer Han...</label>
        <label><input type="checkbox"><svg><use href="#sigma"/></svg>Customer Rati...</label>
        <label><input type="checkbox"><svg></svg>Department</label>
        <label><input type="checkbox"><svg><use href="#sigma"/></svg>Employee Sati...</label>
        <label><input type="checkbox"><svg></svg>FirstName</label>
        <label><input type="checkbox"><svg></svg>Hire Date</label>
        <label><input type="checkbox"><svg></svg>LastName</label>
        <label><input type="checkbox"><svg></svg>Manager Name</label>
        <label><input type="checkbox"><svg><use href="#sigma"/></svg>Monthly Sales</label>
        <label><input type="checkbox"><svg></svg>Role</label>
      </div>
      <i class="thumb"></i>
    </div>
  </aside>
</main>

<footer class="status">
  <span>Page 1 of 1</span>
  <div class="zoom"><button aria-label="Zoom out">-</button><input type="range" min="0" max="100" value="23" aria-label="Zoom"><button aria-label="Zoom in">+</button><span>53%</span><button class="fit" aria-label="Fit to page"><svg width="24" height="18" viewBox="0 0 24 18" fill="none" stroke="#605e5c" stroke-width="1.600"><path d="M1 1h22v16H1zM4 7V4h4M16 4h4v3M4 11v3h4M16 14h4v-3"/></svg></button></div>
</footer>

<footer class="taskbar">
  <button class="weather"><svg width="34" height="34" viewBox="0 0 34 34"><path d="M19 1q13 3 14 15-1 16-17 17Q5 33 1 24q12 2 17-7 3-8 1-16z" fill="url(#moon)"/></svg><span>25°C<br><small>Clear</small></span></button>
  <div class="apps">
    <button aria-label="Start"><svg width="36" height="36" viewBox="0 0 36 36" fill="url(#win)"><path d="M0 0h17v17H0zM19 0h17v17H19zM0 19h17v17H0zM19 19h17v17H19z"/></svg></button>
    <label class="find"><svg width="24" height="24" viewBox="0 0 24 24" fill="none" stroke="#252423" stroke-width="2.400"><circle cx="11" cy="10" r="8.500"/><path d="M17 16l6 7"/></svg><input type="text" placeholder="Search" aria-label="Search Windows"><svg width="72" height="42" viewBox="0 0 72 42"><path d="M0 34h72v4q-4 4-10 4H8q-8 0-8-8z" fill="#35a8d8"/><path d="M0 30l3-6 2 5 4-9 3 8 5-9v19H2zM72 30l-3-6-2 5-4-9-3 8-5-9v19h15z" fill="#3a2f5c"/><path d="M16 16h40v24H16z" fill="#a8472c"/><path d="M14 18h44v5H14z" fill="#7c2e20"/><path d="M20 0h32v18H20z" fill="#c9a876"/><path d="M23 5q6-3 13 1t13-1v15q-6 2-13-1t-13 1z" fill="url(#rain)"/><path d="M30 28h12v12H30z" fill="#3a1f1a"/><path d="M20 25h6v9h-6zM46 25h6v9h-6z" fill="#e08a4a"/></svg></label>
    <button aria-label="Task view"><svg width="36" height="36" viewBox="0 0 36 36"><path d="M9 2h25v24H9z" fill="#ececec"/><path d="M1 10h25v24H1z" fill="#222"/><path d="M9 10h17v16H9z" fill="#999"/></svg></button>
    <button aria-label="Copilot"><svg width="36" height="34"><use href="#copilot"/></svg></button>
    <button aria-label="File Explorer"><svg width="38" height="34" viewBox="0 0 38 34"><path d="M0 3q0-2 2-2h11l4 5h19q2 0 2 2v10H0z" fill="#e0a010"/><path d="M1 8h36v23q0 3-3 3H4q-3 0-3-3z" fill="#ffcf48"/><path d="M7 34v-7q0-4 4-4h16q4 0 4 4v7h-5v-6H12v6z" fill="#1678cf"/></svg></button>
    <button aria-label="Edge"><svg width="38" height="36" viewBox="0 0 38 36"><circle cx="19" cy="18" r="18" fill="url(#edge)"/><path d="M14 22q0 10 12 12-14 4-22-7-3-12 9-15 9 0 11 7-1 5-2 5h8q6 0 7-6-1 12-11 9-7 0-12-5z" fill="#0c4f9e"/><path d="M22 24q3-4 1-8-5-5-9 2 0 10 16 11 5-2 6-6-6 5-14 1z" fill="#eeeed8"/></svg></button>
    <button aria-label="Microsoft Store"><svg width="36" height="36" viewBox="0 0 36 36"><path d="M11 8V2q0-1 1-1h12q1 0 1 1v6" fill="none" stroke="#35a8e8" stroke-width="2.500"/><path d="M1 7h34v26q0 3-3 3H4q-3 0-3-3z" fill="#1a5796"/><path d="M10 13h7v7h-7z" fill="#f25022"/><path d="M19 13h7v7h-7z" fill="#7fba00"/><path d="M10 22h7v7h-7z" fill="#00a4ef"/><path d="M19 22h7v7h-7z" fill="#ffb900"/></svg></button>
    <button aria-label="WPS Office"><svg width="36" height="36" viewBox="0 0 36 36"><circle cx="18" cy="18" r="18" fill="#fb2c1a"/><path d="M7 12h7l3 10 3-6M15 12h14l-6 14h-3l-4-13M7 12l5 14h4l2-5" fill="none" stroke="#fff" stroke-width="2.400"/></svg></button>
    <button class="wa" aria-label="WhatsApp"><svg width="36" height="36" viewBox="0 0 36 36" fill="none" stroke="#178a52" stroke-width="3"><path d="M3 34l2-9A15.500 15.500 0 1 1 11 31z"/><path d="M12 11q-3 3 2 8t9 5l3-2-4-4-3 2-4-5 1-3-2-2z" fill="#178a52" stroke="none"/></svg><b>60</b></button>
    <button class="active" aria-label="Power BI"><svg width="38" height="38" viewBox="0 0 38 38"><path d="M0 0h38v38H0z" fill="#1379d2"/><path d="M21 1h12v36H21z" fill="#d9920f"/><path d="M12 10h13v27H12z" fill="#f2bd24"/><path d="M4 19h13v18H4z" fill="#fbdc6a"/></svg></button>
  </div>
  <div class="tray">
    <svg width="16" height="10" viewBox="0 0 16 10"><path d="M1 9l7-7 7 7" fill="none" stroke="#252423" stroke-width="1.800"/></svg>
    <svg width="28" height="26" viewBox="0 0 28 26"><path d="M3 12q2-10 11-10 7 0 10 6M24 1v7h-7M3 15q1 6 6 8M2 22v-7h7" fill="none" stroke="#252423" stroke-width="1.800"/><circle cx="20" cy="19" r="6" fill="#f7941d"/></svg>
    <svg width="26" height="18" viewBox="0 0 26 18"><path d="M7 16q-6-1-6-6 1-4 6-5 3-5 9-3 4 2 4 5 5 1 5 5-1 4-5 4z" fill="#c8c6c4" stroke="#252423" stroke-width="1.600"/><path d="M5 0l18 18" stroke="#252423" stroke-width="1.600"/></svg>
    <span class="net"><svg width="24" height="20" viewBox="0 0 24 20" fill="none" stroke="#252423" stroke-width="1.900"><path d="M1 7q11-10 22 0M5 11q7-7 14 0M8 15q4-4 8 0"/><circle cx="12" cy="18" r="1"/></svg>
    <svg width="26" height="20" viewBox="0 0 26 20" fill="none" stroke="#252423" stroke-width="1.700"><path d="M1 7h4l6-5v16l-6-5H1zM14 6q3 4 0 8M17 3q6 7 0 14M21 1q7 9 0 18"/></svg>
    <svg width="26" height="16" viewBox="0 0 26 16"><rect x="1" y="1" width="20" height="14" rx="3" fill="none" stroke="#252423" stroke-width="1.800"/><path d="M4 4h6v8H4zM23 5h2v6h-2z" fill="#252423"/></svg></span>
    <time>22:40<br>28/06/2025</time>
  </div>
</footer>
</body>
</html>
```
FILE: styles.css
```css
* { box-sizing: border-box; }
body {
  margin: 0;
  height: 100vh;
  display: flex;
  flex-direction: column;
  overflow: hidden;
  font: 17px/24px "Open Sans", "Noto Sans", sans-serif;
  color: #252423;
  background: #f3f2f1;
}
button, input { font: inherit; color: inherit; }
button { border: 0; padding: 0; background: none; }
h1, h2, h3, h4, p { margin: 0; }
svg { display: block; flex: none; overflow: visible; }
i, em { font-style: normal; }
.defs { position: absolute; width: 0; height: 0; }

/* title bar */
.titlebar { height: 51px; flex: none; display: flex; align-items: center; background: #3b3a39; color: #fff; padding-left: 15px; }
.titlebar button { margin-right: 23px; }
.titlebar .save { width: 44px; height: 45px; align-self: flex-start; background: #252423; margin-right: 11px; padding: 8px 10px 0; }
.titlebar .filename { display: flex; align-items: center; gap: 10px; padding-top: 6px; margin-left: -10px; }
.titlebar .signin { display: flex; align-items: center; gap: 16px; margin: 0 22px 0 auto; }
.titlebar .wbtn { width: 66px; display: flex; justify-content: center; margin: 0; padding-top: 4px; }

/* ribbon */
.ribbon { height: 189px; flex: none; background: #fafafa; box-shadow: 0 2px 8px rgba(0,0,0,.28); position: relative; z-index: 2; }
.tabs { display: flex; height: 54px; padding: 6px 9px 0 34px; font-size: 20px; align-items: flex-start; gap: 46px; }
.tabs button { height: 41px; border-bottom: 5px solid transparent; }
.tabs .on { font-weight: 600; border-color: #117865; margin-left: 8px; }
.tabs .share { display: flex; align-items: center; justify-content: center; gap: 9px; width: 125px; height: 36px; margin-left: auto; border: 0; border-radius: 5px; background: #117865; color: #fff; font-size: 17px; }
.tabs .share svg:first-child { margin-right: 2px; }
.groups { display: flex; height: 132px; }
.group { border-right: 1px solid #c8c6c4; display: flex; flex-direction: column; justify-content: space-between; }
.group p { text-align: center; font-size: 14px; line-height: 16px; }
.cmds { display: grid; padding-top: 7px; }
.cmd { display: flex; flex-direction: column; align-items: center; justify-content: flex-start; gap: 3px; white-space: nowrap; }
.ic { width: 48px; height: 48px; }
.c { display: inline-block; width: 10px; height: 8px; vertical-align: 1px; margin-left: -2px; }
.off { color: #c8c6c4; }
.fx { font: italic 30px "Liberation Serif", serif; fill: #a8a8a8; }
.g-clip { width: 240px; }
.g-clip .cmds { grid-template-columns: 64px 1fr; padding-left: 10px; }
.stack { display: flex; flex-direction: column; gap: 12px; padding-left: 4px; }
.stack button { display: flex; align-items: center; gap: 5px; height: 24px; white-space: nowrap; }
.g-data { width: 537px; }
.g-data .cmds { grid-template-columns: 66px 79px 86px 57px 63px 80px 86px; padding-left: 9px; }
.g-query { width: 173px; }
.g-query .cmds { grid-template-columns: 82px 66px; padding-left: 13px; }
.g-insert { width: 220px; }
.g-insert .cmds { grid-template-columns: 54px 64px 70px; padding-left: 16px; }
.g-calc { width: 278px; }
.g-calc .cmds { grid-template-columns: 108px 72px 74px; padding-left: 12px; }
.g-sens { width: 110px; }
.g-share { width: 87px; }
.g-copilot { width: 197px; }
.g-copilot .cmds { grid-template-columns: 111px 60px; padding-left: 11px; }
.collapse { margin: auto 7px 6px auto; }

/* work area */
.work { flex: 1; min-height: 0; display: flex; border-bottom: 1px solid #d2d0ce; }
.rail { width: 61px; flex: none; border-right: 1px solid #d2d0ce; }
.rail button { width: 60px; height: 60px; display: flex; align-items: center; justify-content: center; padding-bottom: 2px; }
.rail .on { border-left: 4px solid #117865; padding-right: 4px; }
.dax { font: 700 12px "Open Sans", sans-serif; fill: #605e5c; stroke: none; }
.report { flex: 1; min-width: 0; display: flex; flex-direction: column; border-right: 1px solid #a19f9d; }
.canvas { position: relative; height: 571px; flex: none; background: #fdf7fc; overflow: hidden; box-shadow: 0 2px 9px rgba(90,90,90,.5); z-index: 1; font-size: 11px; }
.beyond { flex: 1; background: #f0a0da; }
.visual { position: absolute; background: #fdf3fb; }
.canvas h2 { font: 500 13px/16px Roboto, sans-serif; padding: 0 4px; }
.banner { left: 7px; top: 7px; width: 560px; height: 46px; background: #ed88d2; color: #fff; font-size: 19px; line-height: 48px; text-align: center; font-weight: 700; white-space: nowrap; box-shadow: 2px 2px 6px #d88cc4; }
.card { display: flex; flex-direction: column; align-items: center; width: 127px; height: 87px; padding-top: 21px; }
.card b { font: 500 41px/42px Roboto, sans-serif; color: #000; }
.card span { font-size: 12px; line-height: 20px; margin-top: 2px; color: #000; }
.k1 { left: 8px; top: 66px; }
.k2 { left: 137px; top: 66px; }
.k3 { left: 264px; top: 60px; }
.k4 { left: 407px; top: 62px; width: 150px; }
.slicer { left: 572px; top: 0; width: 258px; height: 136px; }
.tiles { display: grid; grid-template-columns: repeat(3, 79px); gap: 6px; padding: 3px 4px; }
.tiles button { height: 34px; border: 1px solid #c8c6c4; box-shadow: inset 0 0 0 1px #e8e2e6; text-align: left; padding-left: 10px; font: 500 11px Roboto, sans-serif; color: #000; }
.checks { left: 836px; top: 0; width: 180px; height: 92px; }
.checks header { display: flex; justify-content: space-between; height: 20px; padding: 4px 11px 0 0; align-items: flex-start; }
.checks header svg { margin-top: 2px; color: #605e5c; }
.checks .body { display: flex; justify-content: space-between; padding: 1px 3px 0 4px; }
.checks label { display: flex; align-items: center; gap: 6px; height: 23px; font-size: 12px; }
.checks input { appearance: none; width: 14px; height: 14px; margin: 0; border: 1px solid #605e5c; }
.checks .thumb { width: 7px; height: 58px; background: #8a8886; }
.sat-status { left: 8px; top: 164px; width: 256px; height: 154px; }
.sat-status h2 { padding-bottom: 2px; }
.sat-total { left: 530px; top: 147px; width: 188px; height: 226px; }
.complaints { left: 734px; top: 113px; width: 282px; height: 147px; }
.complaints h2, .salary h2 { padding-bottom: 1px; }
.salary { left: 758px; top: 266px; width: 258px; height: 296px; }
.monthly { left: 247px; top: 347px; width: 256px; height: 204px; }
.monthly h2, .pie h2 { padding-bottom: 2px; }
.pie { left: 503px; top: 382px; width: 242px; height: 189px; }
.names { left: 272px; top: 152px; width: 210px; height: 194px; padding: 4px; display: flex; justify-content: space-between; }
.depts { left: 13px; top: 374px; width: 212px; height: 188px; padding: 4px; }
.canvas table { border-collapse: collapse; background: #fff; font-size: 10px; line-height: 16px; white-space: nowrap; table-layout: fixed; }
.canvas th, .canvas td { padding: 0 0 0 4px; text-align: left; font-weight: 400; height: 17px; }
.names table { width: 189px; }
.names th:first-child { width: 64px; }
.names th { height: 18px; }
.names tbody tr:nth-child(odd), .depts tbody tr:nth-child(even) { background: #ececec; }
.names tbody tr:nth-child(5n) td, .depts tbody tr:nth-child(5n) td { height: 16px; }
.depts table { width: 204px; }
.depts th { height: 22px; vertical-align: top; border-bottom: 1px solid #a9d0f0; }
.depts th:first-child { width: 93px; }
.depts th:first-child::after { content: ""; display: block; width: 0; border: 3px solid transparent; border-top: 4px solid #111; border-bottom: 0; }
.dot { width: 6px; height: 8px; border-radius: 3px; background: #a19f9d; margin: 11px 0 0; }
.hbar { display: block; width: 189px; height: 6px; border-radius: 3px; background: #a8a5a7; }
.grid { stroke: #d0cdd0; stroke-dasharray: 1 3; fill: none; }
.bar { fill: #ed88d2; }
.tick { font-size: 10px; fill: #605e5c; }
.axis { font: 400 9px Roboto, sans-serif; fill: #252423; }
.big { font-size: 12px; font-weight: 500; }
.legend { font-size: 11px; fill: #605e5c; }
.legend .b { font-weight: 600; font-size: 10px; }
.mid { text-anchor: middle; }
.end { text-anchor: end; }

.pages { height: 52px; flex: none; display: flex; align-items: center; background: #f3f2f1; }
.mode { width: 36px; height: 46px; margin: 0 0 0 15px; display: flex; align-items: center; justify-content: center; border-bottom: 4px solid transparent; border-radius: 2px; }
.mode.on { border-color: #117865; padding-bottom: 2px; }
.mode + .mode { margin: 0 11px 0 29px; }
.arrow { width: 33px; display: flex; justify-content: center; }
.tab { width: 112px; height: 52px; background: #fff; border-left: 1px solid #a19f9d; border-bottom: 6px solid #117865; font-weight: 600; padding-top: 4px; }
.add { width: 59px; height: 52px; margin-left: 1px; background: #117865; display: flex; align-items: center; justify-content: center; }

/* side panes */
aside header { display: flex; align-items: center; height: 58px; }
aside header h2 { font-size: 22px; font-weight: 600; flex: 1; }
.search { display: flex; align-items: center; background: #fff; }
.search input { border: 0; outline: 0; background: none; min-width: 0; flex: 1; padding: 0; font-size: 18px; }
input::placeholder { color: #605e5c; opacity: 1; }
.filters { width: 300px; flex: none; background: #fff; padding: 0 12px; }
.filters header { padding: 0 3px 0 5px; }
.filters h2 { padding-left: 11px; }
.filters .eye { margin-right: 24px; }
.filters .search { width: 270px; height: 50px; margin-top: 10px; border: 1px solid #a19f9d; border-radius: 2px; padding-left: 15px; gap: 14px; }
.ftitle { display: flex; justify-content: space-between; height: 63px; padding: 25px 16px 0 12px; margin: 6px -12px 0; border-top: 1px solid #a19f9d; }
.ftitle.second { border: 0; margin-top: 14px; }
.ftitle button { height: 24px; letter-spacing: 2px; }
.well { height: 68px; border: 1px solid #c8c6c4; border-radius: 3px; display: flex; align-items: center; justify-content: center; }
.viz { width: 271px; flex: none; border-left: 1px solid #d2d0ce; display: flex; flex-direction: column; }
.viz header { padding: 0 11px 0 12px; }
.viz h3 { font-size: 16px; line-height: 22px; height: 24px; font-weight: 600; padding-left: 12px; }
.modes { display: flex; gap: 50px; padding: 4px 0 7px 12px; }
.modes button { width: 48px; height: 48px; border-radius: 3px; display: flex; align-items: center; justify-content: center; }
.modes .on { background: #d2d0ce; }
.notch { width: 100%; height: 14px; overflow: hidden; }
.gallery { display: grid; grid-template-columns: repeat(6, 28px); gap: 14px; padding: 15px 0 0 16px; }
.gallery svg { width: 28px; height: 28px; }
.w { fill: #fff; stroke: #3b3a39; stroke-width: 1.7; }
.gr { fill: #c8c6c4; stroke: #797775; stroke-width: 1.5; }
.bl { fill: #83beec; stroke: #0063b1; stroke-width: 1.6; }
.bl.n { stroke: none; }
.bs { fill: none; stroke: #0063b1; stroke-width: 1.6; }
.ax { fill: none; stroke: #3b3a39; stroke-width: 1.7; }
.num { font-size: 13px; fill: #1e8bcd; text-anchor: middle; }
.let { font-size: 24px; font-weight: 700; fill: #1e8bcd; text-anchor: middle; }
.more { align-self: flex-start; margin-left: 17px; height: 38px; font-size: 20px; font-weight: 700; letter-spacing: 4px; }
.wells { flex: 1; min-height: 0; border-top: 1px solid #d2d0ce; margin-top: 16px; display: flex; }
.wells .fields { flex: 1; padding: 14px 0 0 6px; }
.wells h4 { font-weight: 400; padding-left: 12px; }
.wells .b { font-weight: 600; color: #484644; }
.drop { height: 43px; margin: 7px 0 16px; padding-left: 15px; background: #fff; border: 1px dashed #c8c6c4; display: flex; align-items: center; }
.toggle { display: flex; align-items: center; justify-content: space-between; padding: 0 24px 0 12px; height: 40px; }
.b + .toggle { margin-top: 5px; }
.sw { position: relative; width: 48px; height: 24px; font-size: 12px; }
.sw input { appearance: none; display: block; width: 48px; height: 24px; margin: 0; border: 1px solid #797775; border-radius: 12px; background: radial-gradient(circle at 12px 11px, #605e5c 6px, #fff 7px); }
.sw em { position: absolute; right: 6px; top: 0; color: #605e5c; }
.sw input:checked { border-color: #117865; background: radial-gradient(circle at 34px 11px, #fff 6px, #117865 7px); }
.sw input:checked + em { color: #fff; right: auto; left: 7px; }
.wells .thumb { width: 9px; height: 171px; margin-top: 3px; border-radius: 5px; background: #8a8886; }
.data { width: 271px; flex: none; border-left: 1px solid #d2d0ce; display: flex; flex-direction: column; padding-right: 6px; }
.data header { padding: 0 6px 0 12px; }
.data .search { height: 35px; flex: none; margin: 10px 0 13px 6px; border: 1px solid #d2d0ce; border-bottom-color: #605e5c; border-radius: 5px; padding-left: 18px; gap: 10px; }
.tree { display: flex; flex: 1; min-height: 0; margin-bottom: 10px; }
.list { flex: 1; overflow: hidden; min-width: 0; padding-top: 2px; white-space: nowrap; }
.list .table { display: flex; align-items: center; height: 36px; gap: 6px; padding-left: 20px; }
.list .table svg + svg { margin-right: 3px; }
.list label { display: flex; align-items: center; height: 36px; padding-left: 66px; }
.list input { appearance: none; width: 18px; height: 18px; margin: 0 12px 0 0; border: 1px solid #797775; border-radius: 3px; flex: none; }
.list label svg { width: 18px; height: 22px; margin-right: 9px; }
.tree .thumb { width: 12px; height: 481px; background: #8a8886; }

/* status bar */
.status { height: 36px; flex: none; display: flex; justify-content: space-between; align-items: center; padding: 4px 27px 0 6px; color: #484644; border-bottom: 2px solid #000; }
.zoom { display: flex; align-items: center; gap: 7px; }
.zoom > button { width: 14px; font-size: 20px; font-weight: 600; }
.zoom > span { margin: 0 21px 0 12px; }
.zoom input { appearance: none; width: 150px; height: 18px; margin: 0; background: linear-gradient(#605e5c,#605e5c) center / 2px 8px no-repeat, linear-gradient(#605e5c,#605e5c) center / 100% 1px no-repeat; }
.zoom input::-webkit-slider-thumb { appearance: none; width: 6px; height: 17px; background: #605e5c; }
.zoom .fit { width: 24px; }

/* taskbar */
.taskbar { height: 72px; flex: none; display: grid; grid-template-columns: 509px 1fr auto; align-items: center; border-top: 2px solid #b8b8a2; padding-right: 28px; background: linear-gradient(90deg, #e6ddd0 0, #e0e6b0 7%, #dadfc8 20%, #e3e0c0 30%, #eae7a8 37%, #e4dcd6 48%, #e8ddd2 60%, #e8e6b2 73%, #e3ea9c 79%, #e6e2ba 90%, #e7e0c6); }
.weather { display: flex; align-items: center; gap: 12px; padding-left: 29px; text-align: left; color: #1b1b1b; }
.weather span, .tray time { padding-bottom: 3px; }
.weather small { font-size: 17px; color: #605e5c; }
.apps { display: flex; align-items: center; gap: 29px; }
.apps button { flex: none; }
.apps .find { width: 327px; height: 45px; margin: 0 -9px 0 -7px; border-radius: 23px; background: #f9f8e8; border-bottom: 1px solid #b5b3a0; display: flex; align-items: center; padding: 0 5px 0 16px; gap: 13px; }
.find input { flex: 1; min-width: 0; border: 0; background: none; padding: 0; }
.wa { position: relative; }
.wa::after { content: ""; position: absolute; left: 14px; bottom: -10px; width: 10px; height: 4px; border-radius: 2px; background: #797775; }
.wa b { position: absolute; left: 16px; top: -7px; width: 28px; height: 24px; border-radius: 12px; background: #0078d4; color: #fff; font-size: 15px; font-weight: 400; }
.apps .active { width: 56px; height: 56px; margin-left: -10px; border-radius: 5px; background: #f7f6e4; display: flex; align-items: center; justify-content: center; box-shadow: inset 0 -4px 0 -1px #d8d8b8; position: relative; }
.active::after { content: ""; position: absolute; bottom: 0; width: 24px; height: 4px; border-radius: 2px; background: #0078d4; }
.tray { display: flex; align-items: center; gap: 24px; }
.net { display: flex; align-items: center; gap: 11px; }
.tray time { text-align: right; color: #1b1b1b; }
```
